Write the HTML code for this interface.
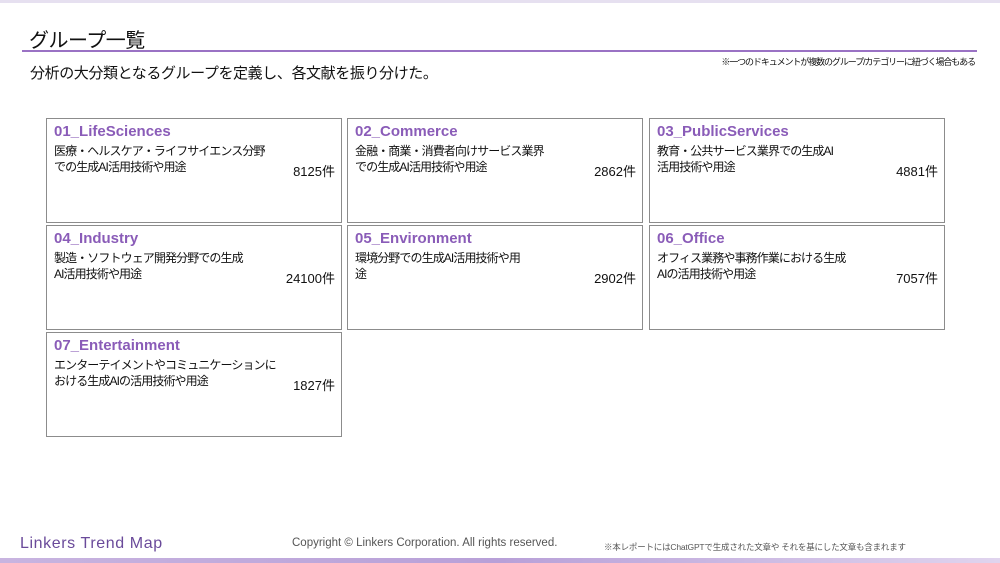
<!DOCTYPE html>
<html><head><meta charset="utf-8"><style>
*{margin:0;padding:0;box-sizing:border-box}
body{width:1000px;height:563px;background:#fff;position:relative;overflow:hidden;font-family:"Liberation Sans","Noto Sans CJK JP",sans-serif;color:#111}
.abs{position:absolute;white-space:nowrap}
.box{position:absolute;width:296px;height:105px;border:1px solid #8c8c8c;background:#fff}
.t{position:absolute;left:7px;top:4px;font-size:15px;font-weight:bold;color:#8a5cb8}
.d{position:absolute;left:7px;top:24px;font-size:12px;line-height:16px;letter-spacing:-0.9px}
.c{position:absolute;right:6px;top:42px;font-size:13px}
</style></head><body>
<div class="abs" style="left:0;top:0;width:1000px;height:3px;background:#e6e0f0"></div>
<div class="abs" style="left:29px;top:24px;font-size:20px;letter-spacing:-0.5px">グループ一覧</div>
<div class="abs" style="left:22px;top:50px;width:955px;height:2px;background:#9a72c4"></div>
<div class="abs" style="left:30px;top:62px;font-size:15px;letter-spacing:-0.4px">分析の大分類となるグループを定義し、各文献を振り分けた。</div>
<div class="abs" style="right:25px;top:55px;font-size:9px;letter-spacing:-1.1px">※一つのドキュメントが複数のグループ/カテゴリーに紐づく場合もある</div>

<div class="box" style="left:46px;top:118px"><div class="t">01_LifeSciences</div><div class="d">医療・ヘルスケア・ライフサイエンス分野<br>での生成AI活用技術や用途</div><div class="c">8125件</div></div>
<div class="box" style="left:347px;top:118px"><div class="t">02_Commerce</div><div class="d">金融・商業・消費者向けサービス業界<br>での生成AI活用技術や用途</div><div class="c">2862件</div></div>
<div class="box" style="left:649px;top:118px"><div class="t">03_PublicServices</div><div class="d">教育・公共サービス業界での生成AI<br>活用技術や用途</div><div class="c">4881件</div></div>
<div class="box" style="left:46px;top:225px"><div class="t">04_Industry</div><div class="d">製造・ソフトウェア開発分野での生成<br>AI活用技術や用途</div><div class="c">24100件</div></div>
<div class="box" style="left:347px;top:225px"><div class="t">05_Environment</div><div class="d">環境分野での生成AI活用技術や用<br>途</div><div class="c">2902件</div></div>
<div class="box" style="left:649px;top:225px"><div class="t">06_Office</div><div class="d">オフィス業務や事務作業における生成<br>AIの活用技術や用途</div><div class="c">7057件</div></div>
<div class="box" style="left:46px;top:332px"><div class="t">07_Entertainment</div><div class="d">エンターテイメントやコミュニケーションに<br>おける生成AIの活用技術や用途</div><div class="c">1827件</div></div>

<div class="abs" style="left:20px;top:535px;font-size:16px;color:#6a4a9a;letter-spacing:0.6px">Linkers Trend Map</div>
<div class="abs" style="left:292px;top:537px;font-size:11.5px;color:#555">Copyright © Linkers Corporation. All rights reserved.</div>
<div class="abs" style="left:604px;top:541px;font-size:8.5px;color:#555;letter-spacing:-0.2px">※本レポートにはChatGPTで生成された文章や それを基にした文章も含まれます</div>
<div class="abs" style="left:0;top:558px;width:1000px;height:5px;background:linear-gradient(90deg,#c8b4e0,#b8a0d8 50%,#e0d4ee)"></div>
</body></html>
